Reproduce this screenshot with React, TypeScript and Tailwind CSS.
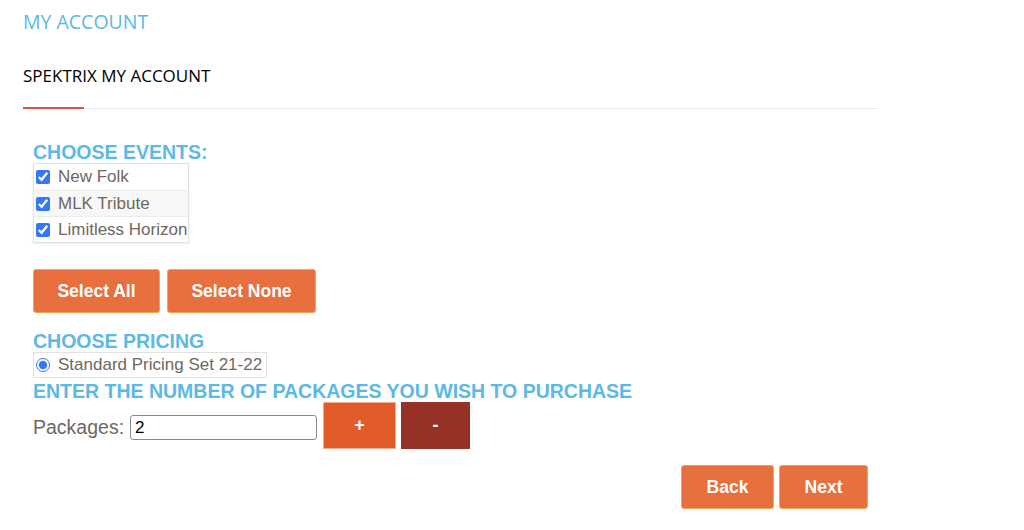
import React from "react";

const events = ["New Folk", "MLK Tribute", "Limitless Horizon"];

const App: React.FC = () => {
  return (
    <div className="w-[1024px] h-[530px] bg-white pl-[23px] pt-[8px] font-['Liberation_Sans',Arial,sans-serif]">
      <div className="w-[854px]">
        <h1 className="text-[19.5px] leading-[28px] text-[#5cb9e4] font-['Open_Sans',sans-serif] font-normal">
          MY ACCOUNT
        </h1>
        <h2 className="mt-[28px] text-[17px] leading-[24px] text-black font-['Open_Sans',sans-serif] font-normal">
          SPEKTRIX MY ACCOUNT
        </h2>
        <div className="mt-[19px] flex items-end">
          <div className="w-[61px] h-[2px] bg-[#e0514a]" />
          <div className="flex-1 h-px bg-[#e9e9e9]" />
        </div>
      </div>

      <div className="pl-[10px] mt-[33px]">
        <h3 className="text-[19.5px] leading-[21px] font-bold text-[#5cb9e4]">
          CHOOSE EVENTS:
        </h3>
        <div className="w-[156px] border border-[#e2e2e2] shadow-[0_1px_2px_rgba(0,0,0,0.08)]">
          {events.map((ev, i) => (
            <label
              key={ev}
              className={
                "flex items-center h-[26px] pl-[2px] " +
                (i === 1 ? "bg-[#f7f7f7] " : "bg-white ") +
                (i > 0 ? "border-t border-[#eeeeee]" : "")
              }
            >
              <input
                type="checkbox"
                defaultChecked
                className="w-[14px] h-[14px] m-0 accent-[#3478f6]"
              />
              <span className="ml-[8px] text-[17px] text-[#6f6761] whitespace-nowrap">{ev}</span>
            </label>
          ))}
        </div>

        <div className="mt-[26px] flex gap-[7px]">
          <button className="w-[127px] h-[44px] bg-[#e8703f] border border-[#f3a152] rounded-[3px] text-white font-bold text-[17.5px]">
            Select All
          </button>
          <button className="w-[149px] h-[44px] bg-[#e8703f] border border-[#f3a152] rounded-[3px] text-white font-bold text-[17.5px]">
            Select None
          </button>
        </div>

        <h3 className="mt-[18px] text-[19.5px] leading-[21px] font-bold text-[#5cb9e4]">
          CHOOSE PRICING
        </h3>
        <label className="flex items-center w-[234px] h-[26px] border border-[#e2e2e2] pl-[2px]">
          <input
            type="radio"
            name="pricing"
            defaultChecked
            className="w-[14px] h-[14px] m-0 accent-[#3478f6]"
          />
          <span className="ml-[8px] text-[17px] text-[#6f6761] whitespace-nowrap">
            Standard Pricing Set 21-22
          </span>
        </label>

        <h3 className="mt-[3px] text-[19.5px] leading-[21px] font-bold text-[#5cb9e4]">
          ENTER THE NUMBER OF PACKAGES YOU WISH TO PURCHASE
        </h3>
        <div className="flex items-center">
          <span className="text-[19.5px] text-[#6f6761] mt-[4px]">Packages:</span>
          <input
            type="text"
            defaultValue="2"
            className="ml-[6px] mt-[4px] w-[187px] h-[25px] border border-[#8a8a8a] rounded-[3px] px-[4px] text-[17px] text-black outline-none"
          />
          <button className="ml-[6px] w-[73px] h-[47px] bg-[#e35b2b] border border-[#f0b090] text-white font-bold text-[18px]">
            +
          </button>
          <button className="ml-[5px] w-[69px] h-[47px] bg-[#983226] text-white font-bold text-[18px]">
            -
          </button>
        </div>
      </div>

      <div className="w-[854px] mt-[16px] flex justify-end gap-[5px] pr-[9px]">
        <button className="w-[93px] h-[44px] bg-[#e8703f] border border-[#f3a152] rounded-[3px] text-white font-bold text-[17.5px]">
          Back
        </button>
        <button className="w-[89px] h-[44px] bg-[#e8703f] border border-[#f3a152] rounded-[3px] text-white font-bold text-[17.5px]">
          Next
        </button>
      </div>
    </div>
  );
};

export default App;
